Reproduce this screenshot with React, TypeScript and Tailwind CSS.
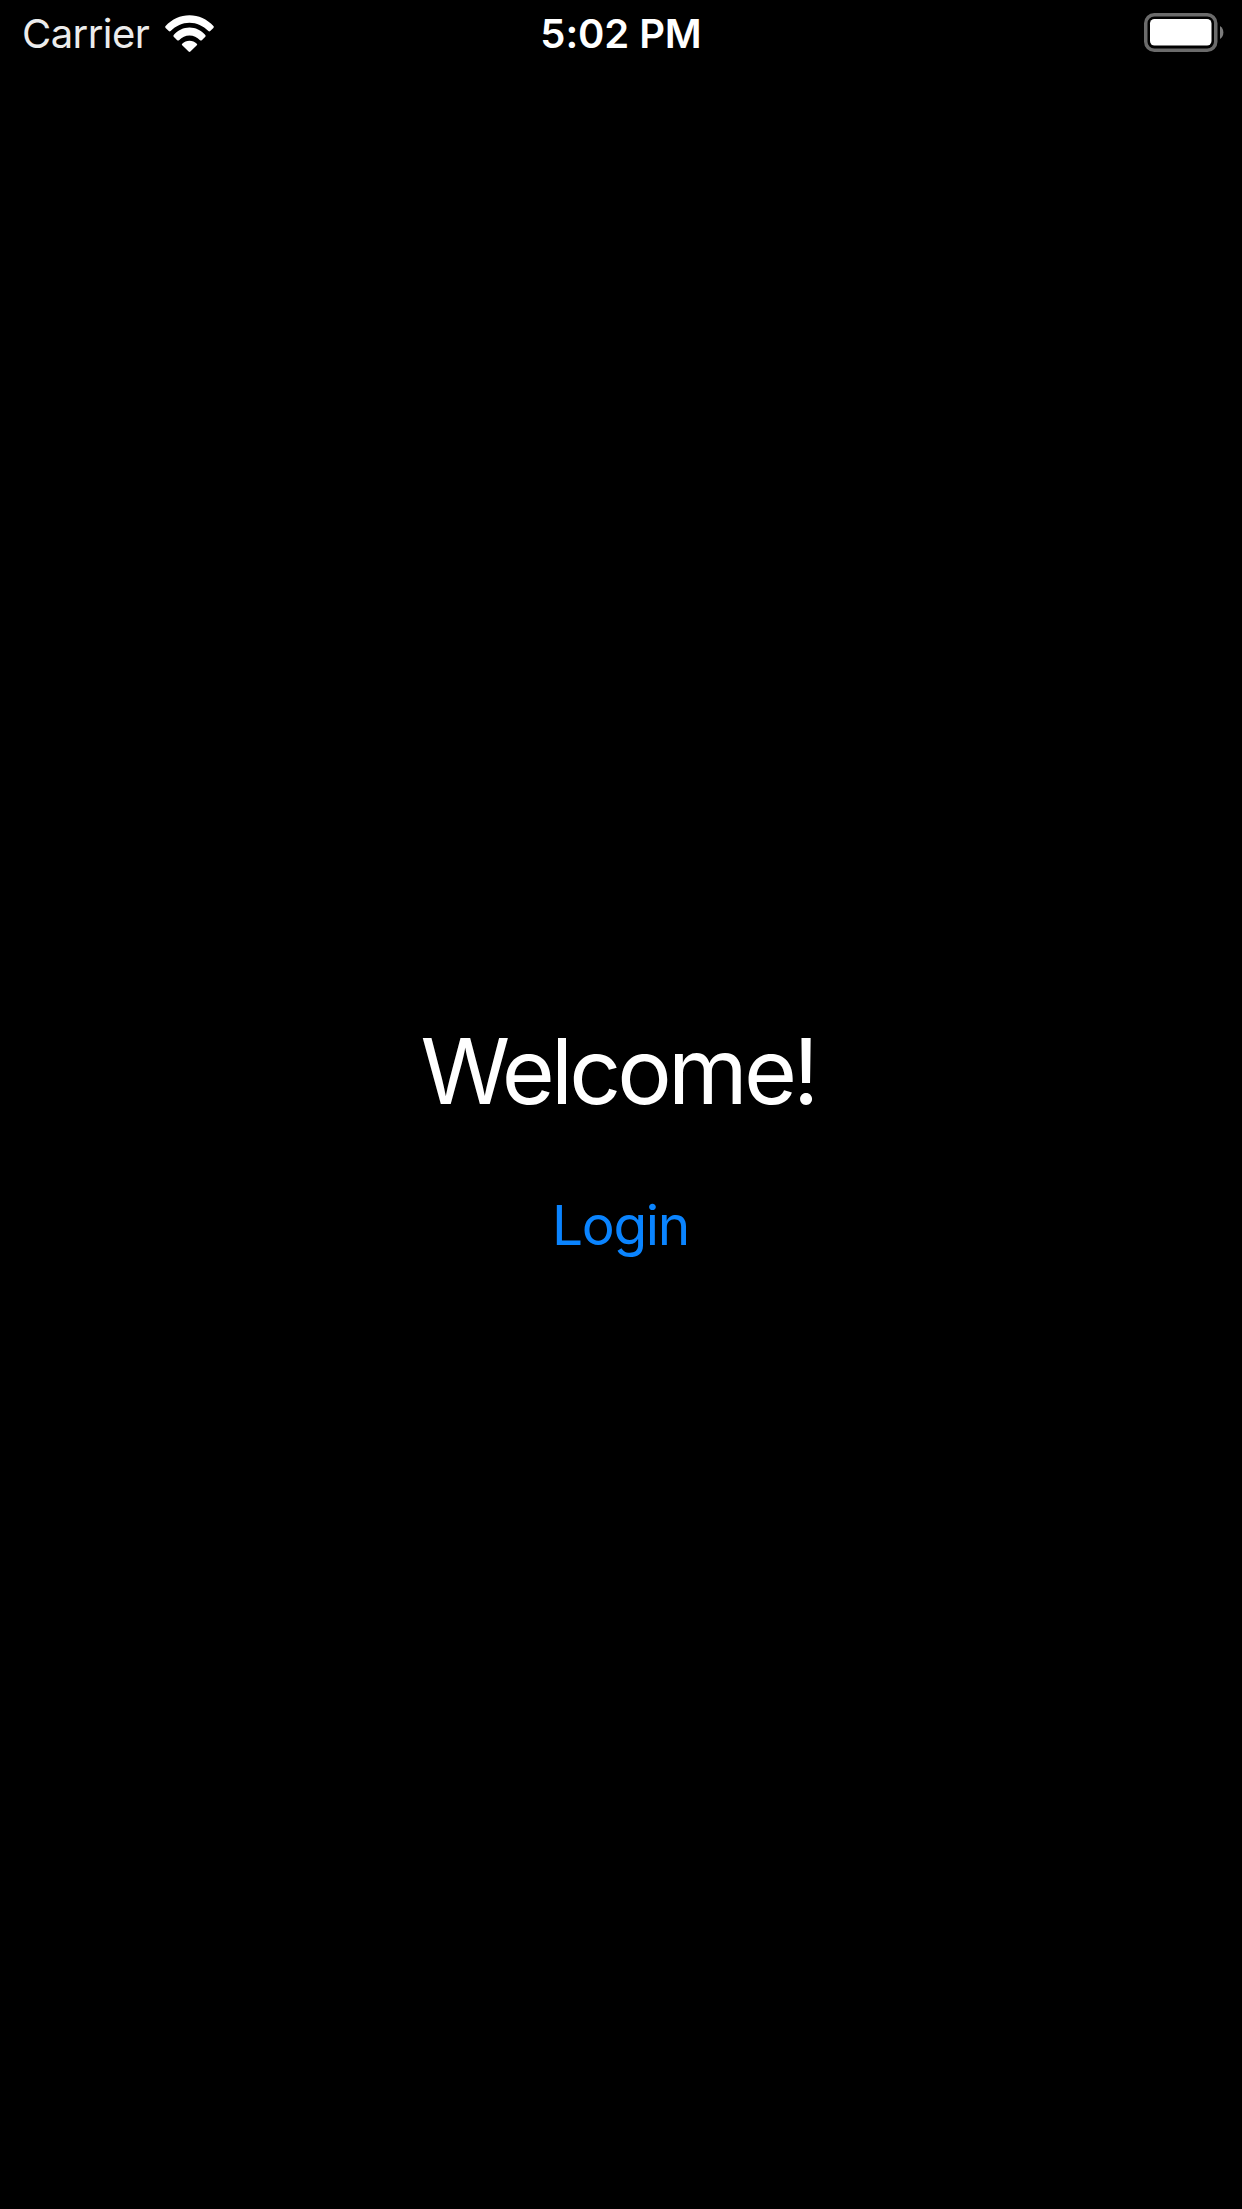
export default function App() {
  return (
    <div className="flex h-[2209px] w-[1242px] flex-col overflow-hidden bg-black font-['Inter',sans-serif] text-white">
      <header className="grid h-[66px] grid-cols-3 items-center pl-[22px] pr-[18px]">
        <div className="flex items-center gap-[16px]">
          <span className="pt-[2px] text-[40px] leading-[48px] tracking-[-0.55px] text-[#ececec]">Carrier</span>
          <svg width="50" height="37" viewBox="0 0 50 37" fill="white">
            <path d="M.6 11.100C7 4.200 15.500.3 24.500.3S42 4.200 48.400 11.100c.6.600.6 1.200 0 1.800l-3.200 3.200c-.6.600-1.200.6-1.800 0C38.200 10.800 31.600 7.700 24.500 7.700S10.800 10.800 5.600 16.100c-.6.600-1.200.6-1.800 0L.6 12.900c-.6-.6-.6-1.200 0-1.800Z" />
            <path d="M8.700 20.100C13 15.300 18.500 12.600 24.500 12.600s11.500 2.700 15.800 7.500c.5.600.5 1.200 0 1.700l-3.500 3.400c-.6.600-1.200.5-1.800 0-3-3-6.500-4.700-10.500-4.700S17 22.200 14 25.200c-.6.500-1.200.6-1.800 0l-3.500-3.400c-.5-.5-.5-1.100 0-1.700Z" />
            <path d="M17.200 28.700c2-1.900 4.500-3 7.300-3s5.300 1.100 7.300 3c.5.500.5 1.100 0 1.600l-6.400 6.200c-.6.600-1.200.6-1.800 0l-6.400-6.200c-.5-.5-.5-1.100 0-1.600Z" />
          </svg>
        </div>
        <time className="pr-[4px] pt-[2px] text-center text-[40px] font-semibold leading-[48px] tracking-[-0.1px]">5:02 PM</time>
        <svg className="justify-self-end" width="81" height="40" viewBox="0 0 81 40" fill="none">
          <rect x="2.750" y="1.750" width="70" height="35.500" rx="8.500" stroke="#6b6b6b" strokeWidth="3.500" />
          <rect x="7" y="6" width="61.500" height="26.500" rx="4.500" fill="white" />
          <path d="M77 13c4.500 2.500 4.500 10.500 0 13Z" fill="#7c7c7c" />
        </svg>
      </header>
      <main className="flex flex-col items-center pt-[950px]">
        <h1 className="mr-[6px] text-[91px] leading-[110px] tracking-[-3.850px]">Welcome!</h1>
        <button className="mr-[1px] mt-[66px] text-[55px] leading-[66px] tracking-[-1.300px] text-[#0a84ff]">Login</button>
      </main>
    </div>
  );
}
